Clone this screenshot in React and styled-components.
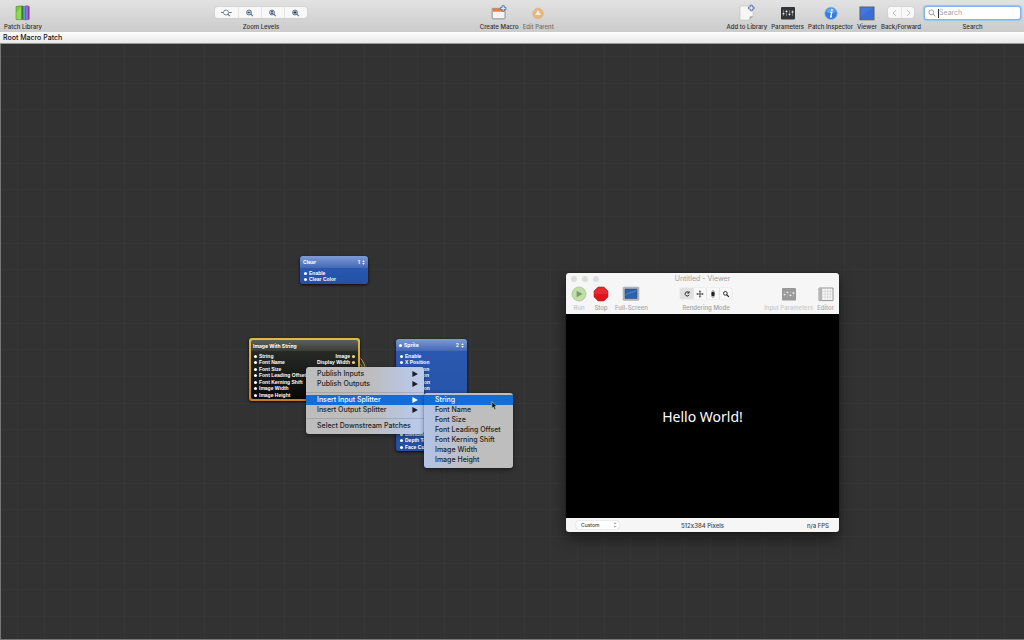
import React from 'react'
import styled, { createGlobalStyle } from 'styled-components'

const App = () => {
  return (
    <Window>
      <GlobalStyle />
      <Toolbar>
        <ToolGroup>
          <Tool label='Patch Library'><BooksIcon /></Tool>
        </ToolGroup>
        <ToolGroup>
          <ToolSet>
            <Segments>
              <Segment $width='23px' aria-label='Actual size'><ZoomIcon kind='actual' /></Segment>
              <Segment $width='23px' aria-label='Zoom out'><ZoomIcon kind='out' /></Segment>
              <Segment $width='23px' aria-label='Zoom to fit'><ZoomIcon kind='fit' /></Segment>
              <Segment $width='23px' aria-label='Zoom in'><ZoomIcon kind='in' /></Segment>
            </Segments>
            <Caption>Zoom Levels</Caption>
          </ToolSet>
        </ToolGroup>
        <ToolGroup>
          <Tool label='Create Macro'><MacroIcon /></Tool>
          <Tool label='Edit Parent' disabled><ParentIcon /></Tool>
        </ToolGroup>
        <ToolGroup>
          <Tool label='Add to Library'><AddIcon /></Tool>
          <Tool label='Parameters'><SlidersIcon /></Tool>
          <Tool label='Patch Inspector'><InfoIcon /></Tool>
          <Tool label='Viewer'><ScreenIcon /></Tool>
          <ToolSet>
            <Segments>
              <Segment $width='13px' aria-label='Back'><Chevron d='M6 2 3 5l3 3' /></Segment>
              <Segment $width='13px' aria-label='Forward'><Chevron d='m4 2 3 3-3 3' /></Segment>
            </Segments>
            <Caption>Back/Forward</Caption>
          </ToolSet>
          <ToolSet>
            <SearchField>
              <svg width='8' height='8' viewBox='0 0 8 8' fill='none' stroke='#777'>
                <circle cx='3.3' cy='3.3' r='2.4' strokeWidth='.7' />
                <path d='m5.1 5.1 2.2 2.3' strokeWidth='.8' />
              </svg>
              <Caret />
              <SearchInput id='search' type='search' placeholder='Search' />
            </SearchField>
            <Caption as='label' htmlFor='search'>Search</Caption>
          </ToolSet>
        </ToolGroup>
      </Toolbar>
      <PathBar>Root Macro Patch</PathBar>

      <Canvas>
        <Noodles width='24' height='26' viewBox='0 0 24 26' fill='none'>
          <path d='M4 10C13 9 15 18 18 26' />
          <path d='M4 16C12 15 13 20 15 26' />
        </Noodles>
        <Patch title='Clear' order='1' left='299px' top='212px' width='68px' inputs={['Enable', 'Clear Color']} />
        <Patch
          title='Image With String'
          left='248px'
          top='294px'
          width='111px'
          inputs={['String', 'Font Name', 'Font Size', 'Font Leading Offset', 'Font Kerning Shift', 'Image Width', 'Image Height']}
          outputs={['Image', 'Display Width']}
          selected
        />
        <Patch title='Sprite' order='2' left='395px' top='295px' width='71px' inputs={spriteInputs} dot />

        <Menu $left='305px' $top='323px' $width='118px' $tint='main'>
          <MenuItem>Publish Inputs<Arrow /></MenuItem>
          <MenuItem>Publish Outputs<Arrow /></MenuItem>
          <Separator />
          <MenuItem $active>Insert Input Splitter<Arrow /></MenuItem>
          <MenuItem>Insert Output Splitter<Arrow /></MenuItem>
          <Separator />
          <MenuItem>Select Downstream Patches</MenuItem>
        </Menu>
        <Menu $left='423px' $top='349px' $width='89px' $tint='sub'>
          {splitterInputs.map((name) => (
            <MenuItem key={name} $active={name === 'String'}>{name}</MenuItem>
          ))}
        </Menu>
        <Cursor width='7' height='10' viewBox='0 0 7 10'>
          <path d='M.8.6v7l1.6-1.5 1.2 2.8 1.4-.6-1.2-2.7h2.3z' fill='#111' stroke='#ddd' strokeWidth='.6' />
        </Cursor>

        <Viewer>
          <TitleBar>
            <Lights><i /><i /><i /></Lights>
            Untitled - Viewer
          </TitleBar>
          <ViewerTools>
            <ViewerGroup $gap='6px'>
              <Tool label='Run' tone='#c4c4c4'><RunIcon /></Tool>
              <Tool label='Stop' tone='#a2a2a2'><StopIcon /></Tool>
              <Tool label='Full-Screen' tone='#a8a8a8'><DisplayIcon /></Tool>
            </ViewerGroup>
            <ToolSet>
              <Segments>
                <Segment $width='13px' $on aria-label='Rotate'>
                  <Glyph><path d='M7.2 3.2A2.6 2.6 0 1 0 7.6 6M7.6 1.6v2.2H5.4' /></Glyph>
                </Segment>
                <Segment $width='13px' aria-label='Pan'>
                  <Glyph><path d='M5 1v8M1 5h8M4 2l1-1 1 1M4 8l1 1 1-1M2 4 1 5l1 1M8 4l1 1-1 1' strokeWidth='.9' /></Glyph>
                </Segment>
                <Segment $width='13px' aria-label='Mouse'>
                  <Glyph><path d='M3.4 2.2 5 .6l1.6 1.6M3.4 7.8 5 9.4l1.6-1.6' strokeWidth='.8' /><rect x='3.1' y='2.6' width='3.8' height='4.8' rx='1.2' fill='#222' strokeWidth='.4' /></Glyph>
                </Segment>
                <Segment $width='13px' aria-label='Magnify'>
                  <Glyph><circle cx='4.2' cy='4.2' r='2.3' /><path d='m5.8 5.8 2.8 2.8' strokeWidth='1.5' /></Glyph>
                </Segment>
              </Segments>
              <Caption $tone='#a2a2a2'>Rendering Mode</Caption>
            </ToolSet>
            <ViewerGroup $gap='4px'>
              <Tool label='Input Parameters' tone='#c8c8c8'><SlidersIcon color='#999' /></Tool>
              <Tool label='Editor' tone='#a8a8a8'><TableIcon /></Tool>
            </ViewerGroup>
          </ViewerTools>
          <Stage>Hello World!</Stage>
          <StatusBar>
            <SizePicker>
              <SizeSelect aria-label='Viewer size'><option>Custom</option></SizeSelect>
              <svg width='4' height='6' viewBox='0 0 4 6' fill='none' stroke='#555' strokeWidth='.6'>
                <path d='M.8 2 2 .8 3.2 2M.8 4 2 5.2 3.2 4' />
              </svg>
            </SizePicker>
            <span>512x384 Pixels</span>
            <span>n/a FPS</span>
          </StatusBar>
        </Viewer>
      </Canvas>
    </Window>
  )
}

export default App

const spriteInputs = [
  'Enable', 'X Position', 'Y Position', 'Z Position', 'X Rotation', 'Y Rotation', 'Z Rotation',
  'Width', 'Height', 'Color', 'Image', 'Mask Image', 'Blending', 'Depth Testing', 'Face Culling'
]

const splitterInputs = [
  'String', 'Font Name', 'Font Size', 'Font Leading Offset', 'Font Kerning Shift', 'Image Width', 'Image Height'
]

const Tool = ({ label, tone, disabled, children }) => (
  <ToolButton disabled={disabled}>
    {children}
    <Caption $tone={tone}>{label}</Caption>
  </ToolButton>
)

const Patch = ({ title, order, left, top, width, inputs, outputs = [], selected, dot }) => (
  <PatchBox $left={left} $top={top} $width={width} $selected={selected}>
    <PatchHead $selected={selected}>
      <PatchTitle>{dot && <Port />}{title}</PatchTitle>
      {order && (
        <Order>
          {order}
          <svg width='3' height='5' viewBox='0 0 3 5' fill='#fff'><path d='M1.5.2 2.8 2H.2zM1.5 4.8.2 3h2.6z' /></svg>
        </Order>
      )}
    </PatchHead>
    <PatchBody $selected={selected}>
      {inputs.map((name, i) => (
        <PortRow key={name}>
          <PortName><Port />{name}</PortName>
          {outputs[i] && <PortName>{outputs[i]}<Port $color='#f0d98a' /></PortName>}
        </PortRow>
      ))}
    </PatchBody>
  </PatchBox>
)

const BooksIcon = () => (
  <svg width='16' height='16' viewBox='0 0 16 16'>
    <path d='M1 1.5 6.5.8v14L1 14.4z' fill='#79c83c' stroke='#487c2a' strokeWidth='.5' />
    <path d='M1.4 8 6.4 1v13.4l-5-.4z' fill='#a1e264' opacity='.6' />
    <path d='M6.5.8h1.7v14H6.5z' fill='#3d7a32' />
    <path d='M8.2 1.4h2.3v13.4H8.2z' fill='#4b9fdb' stroke='#28577f' strokeWidth='.4' />
    <path d='M10.5.8h2.7v14h-2.7z' fill='#b463d3' stroke='#603075' strokeWidth='.4' />
    <path d='M13.2 1.2h1.3v13.2h-1.3z' fill='#6e3590' />
  </svg>
)

const ZoomIcon = ({ kind }) => (
  <svg width='11' height='8' viewBox='0 0 11 8' fill='none' stroke='#50698a' strokeWidth='.8'>
    <circle cx='5' cy='3.5' r='2.5' fill={kind === 'actual' ? '#fff' : '#b4c4d8'} />
    <path d='m6.8 5.2 2 2' strokeWidth='1.1' />
    {kind === 'actual' && <path d='M.2 3.5h1.9M8.2 3.5h2.4' stroke='#444' />}
    {kind === 'out' && <path d='M3.8 3.5h2.4' stroke='#333' />}
    {kind === 'fit' && <path d='M4 2.7h2M4 4.3h2' stroke='#333' />}
    {kind === 'in' && <path d='M3.6 3.5h2.8M5 2.1v2.8' stroke='#222' />}
  </svg>
)

const MacroIcon = () => (
  <svg width='16' height='16' viewBox='0 0 16 16'>
    <rect x='1.2' y='3.4' width='12.8' height='10.4' rx='.6' fill='#f4f4f4' stroke='#6c7078' strokeWidth='.7' />
    <path d='M1.6 3.7h12v3h-12z' fill='#ee7b35' />
    <path d='M11.2.6h2v1.8H15v2h-1.8v1.8h-2V4.4H9.4v-2h1.8z' fill='#dfe8f6' stroke='#4c6794' strokeWidth='.8' />
  </svg>
)

const ParentIcon = () => (
  <svg width='16' height='16' viewBox='0 0 16 16'>
    <circle cx='8' cy='8.4' r='5.2' fill='#f7a23c' stroke='#d98a38' strokeWidth='.6' />
    <path d='m8 5 3 5H5z' fill='#fff8ee' />
  </svg>
)

const AddIcon = () => (
  <svg width='16' height='18' viewBox='0 0 16 18'>
    <path d='M1 3h13v10l-3.5 4H1z' fill='#f6f6f6' stroke='#b4b4b4' strokeWidth='.5' />
    <path d='m14 13-3.5 4 .2-3.6z' fill='#a8a8a8' />
    <path d='M11.3 2.2h2V4h1.8v2h-1.8v1.8h-2V6H9.5V4h1.8z' fill='#dfe8f6' stroke='#4c6794' strokeWidth='.8' />
  </svg>
)

const SlidersIcon = ({ color = '#333538' }) => (
  <svg width='16' height='16' viewBox='0 0 16 16'>
    <rect x='1' y='2' width='14' height='12.6' rx='1' fill={color} />
    <path d='M3.5 5v6M6.5 5v6M9.5 5v6M12.5 5v6' stroke='#bbb' strokeWidth='.5' />
    <path d='M2.6 8.6h1.8M5.6 6.4h1.8M8.6 9.4h1.8M11.6 7h1.8' stroke='#eee' strokeWidth='1.3' />
  </svg>
)

const InfoIcon = () => (
  <svg width='16' height='16' viewBox='0 0 16 16'>
    <circle cx='8' cy='8.4' r='6.2' fill='#2f7de0' stroke='#8eb5e6' strokeWidth='.8' />
    <path d='M3 6.4a5.4 5.4 0 0 1 10 0c-2 2-8 2-10 0z' fill='#79aef0' opacity='.7' />
    <circle cx='8.9' cy='5.1' r='1' fill='#fff' />
    <path d='M7.2 7.4h1.6L7.7 11.8h1.2' fill='none' stroke='#fff' strokeWidth='1.3' />
  </svg>
)

const ScreenIcon = () => (
  <svg width='16' height='16' viewBox='0 0 16 16'>
    <rect x='1' y='2' width='14' height='12.8' fill='#3a6dd8' stroke='#5a5e66' strokeWidth='1' />
    <path d='M1.6 2.6h12.8L1.6 12z' fill='#5a8aec' opacity='.35' />
  </svg>
)

const Chevron = ({ d }) => (
  <svg width='10' height='10' viewBox='0 0 10 10' fill='none' stroke='#b4b4b4' strokeWidth='.8'><path d={d} /></svg>
)

const RunIcon = () => (
  <svg width='16' height='16' viewBox='0 0 16 16'>
    <circle cx='8' cy='8' r='7' fill='#bfe0a4' stroke='#a9b89f' strokeWidth='.7' />
    <path d='M5.6 4.8 11.6 8l-6 3.2z' fill='#7b9a6d' />
  </svg>
)

const StopIcon = () => (
  <svg width='16' height='16' viewBox='0 0 16 16'>
    <path d='M5.1 1h5.8L15 5.1v5.8L10.9 15H5.1L1 10.9V5.1z' fill='#e0141c' stroke='#a5383b' strokeWidth='.6' />
    <path d='M5.3 1.5h5.4l3.8 3.8V8h-13V5.3z' fill='#f04a4c' opacity='.4' />
  </svg>
)

const DisplayIcon = () => (
  <svg width='18' height='16' viewBox='0 0 18 16'>
    <rect x='1.2' y='1.2' width='15.6' height='13' rx='.6' fill='#b9bcc2' stroke='#8f9299' strokeWidth='.6' />
    <path d='M3 3h12v9.4H3z' fill='#2e62b0' stroke='#1d3c6c' strokeWidth='.5' />
    <path d='M3.4 9.4c4-4 7-1.4 11.2-5.4' stroke='#5b90d6' strokeWidth='.8' fill='none' />
  </svg>
)

const TableIcon = () => (
  <svg width='16' height='16' viewBox='0 0 16 16'>
    <path d='M1 2h14v12.6H1z' fill='#f6f6f6' stroke='#8b8b8b' strokeWidth='.9' />
    <path d='M1.2 2h3v12.4h-3z' fill='#b4b4b4' />
    <path d='M7 3v11M9.6 3v11M12.2 3v11M4.4 5.4H15M4.4 8.2H15M4.4 11H15' stroke='#c9c9c9' strokeWidth='.5' />
  </svg>
)

const Arrow = () => (
  <svg width='6' height='6' viewBox='0 0 6 6' fill='currentColor'><path d='M.4.1 5.9 3 .4 5.9z' /></svg>
)

const GlyphSvg = styled.svg.attrs({ viewBox: '0 0 10 10', fill: 'none', stroke: '#222', strokeWidth: 1.2 })`
  width: 8px;
  height: 8px;
`
const Glyph = ({ children }) => <GlyphSvg>{children}</GlyphSvg>

const GlobalStyle = createGlobalStyle`
  * {
    box-sizing: border-box;
  }
  body {
    margin: 0;
    font-family: Inter, "Liberation Sans", sans-serif;
    font-feature-settings: "calt" 0;
    background: #323232;
  }
  button, input, select {
    margin: 0;
    padding: 0;
    border: 0;
    background: none;
    color: inherit;
    font: inherit;
    font-feature-settings: inherit;
  }
  svg {
    display: block;
    flex-shrink: 0;
  }
`
const Window = styled.div`
  display: flex;
  flex-direction: column;
  min-height: 100vh;
`
const Toolbar = styled.header`
  display: flex;
  justify-content: space-between;
  height: 32px;
  padding: 4px 4px 0;
  background: linear-gradient(#e2e2e2, #cbcbcb);
`
const ToolGroup = styled.div`
  display: flex;
  gap: 4px;
`
const ToolButton = styled.button`
  display: flex;
  flex-direction: column;
  align-items: center;
  justify-content: flex-end;
  height: 27px;
  opacity: ${(props) => (props.disabled ? 0.6 : 1)};
`
const ToolSet = styled.div`
  display: flex;
  flex-direction: column;
  align-items: center;
  justify-content: flex-end;
  height: 27px;
`
const Caption = styled.span`
  margin-top: 2px;
  font-size: 6px;
  font-weight: 500;
  line-height: 8px;
  color: ${(props) => props.$tone || '#2e2e2e'};
  white-space: nowrap;
`
const Segments = styled.div`
  display: flex;
  margin-bottom: 3px;
  border-radius: 2px;
  background: #f8f8f8;
  box-shadow: 0 0 1px rgba(0, 0, 0, 0.3);
  overflow: hidden;
`
const Segment = styled.button`
  display: flex;
  align-items: center;
  justify-content: center;
  width: ${(props) => props.$width};
  height: 11px;
  background: ${(props) => (props.$on ? '#e0e0e0' : 'transparent')};
  & + & {
    border-left: 1px solid #e4e4e4;
  }
`
const SearchField = styled.div`
  display: flex;
  align-items: center;
  width: 95px;
  height: 12px;
  margin-bottom: 2px;
  padding: 0 3px;
  border-radius: 2px;
  background: #fff;
  box-shadow: 0 0 0 1px #7fb2ee, 0 0 1px 2px #9cc4f2;
`
const Caret = styled.i`
  width: 1px;
  height: 9px;
  margin-left: 2px;
  background: #333;
`
const SearchInput = styled.input`
  flex: 1;
  min-width: 0;
  font-size: 7px;
  line-height: 10px;
  outline: none;
  &::placeholder {
    color: #a5a5a5;
  }
`
const PathBar = styled.div`
  height: 12px;
  padding: 0 3px;
  border-bottom: 1px solid #9a9a9a;
  background: linear-gradient(#fdfdfd, #e9e9e9);
  font-size: 7px;
  font-weight: 500;
  line-height: 11px;
  color: #111;
`
const Canvas = styled.main`
  position: relative;
  flex: 1;
  border-left: 1px solid #777;
  border-bottom: 1px solid #777;
  background-color: #323232;
  background-image:
    linear-gradient(90deg, #363636 1px, transparent 1px, transparent 27px, #363636 27px, #363636 28px, transparent 28px, transparent 53px, #363636 53px, #363636 54px, transparent 54px),
    linear-gradient(#363636 1px, transparent 1px, transparent 27px, #363636 27px, #363636 28px, transparent 28px, transparent 53px, #363636 53px, #363636 54px, transparent 54px);
  background-size: 80px 80px;
  background-position: 16px 12px;
`
const Noodles = styled.svg`
  position: absolute;
  left: 348px;
  top: 302px;
  stroke: #c9a64a;
`
const PatchBox = styled.section`
  position: absolute;
  left: ${(props) => props.$left};
  top: ${(props) => props.$top};
  width: ${(props) => props.$width};
  padding: ${(props) => (props.$selected ? '2px' : '0')};
  border-radius: 3px;
  background: ${(props) => (props.$selected ? 'linear-gradient(#dcbc4c, #c47a2c)' : '#2450a4')};
  box-shadow: 0 1px 3px rgba(0, 0, 0, 0.8);
  color: #fff;
  font-size: 5px;
  font-weight: 700;
  overflow: hidden;
`
const PatchHead = styled.header`
  display: flex;
  align-items: center;
  justify-content: space-between;
  height: ${(props) => (props.$selected ? '11px' : '12px')};
  padding: 0 ${(props) => (props.$selected ? '2px' : '3px')};
  background: ${(props) => (props.$selected ? 'linear-gradient(#5e605c, #3a3c38)' : 'linear-gradient(#7d9bd6, #4468b4)')};
  border-radius: 2px 2px 0 0;
`
const PatchTitle = styled.span`
  display: flex;
  align-items: center;
  gap: 2px;
`
const Order = styled.span`
  display: flex;
  align-items: center;
  gap: 2px;
`
const PatchBody = styled.div`
  display: flex;
  flex-direction: column;
  padding: ${(props) => (props.$selected ? '2px 3px 1px' : '2px 4px 1px')};
  border-radius: 0 0 2px 2px;
  background: ${(props) => (props.$selected ? 'linear-gradient(#272a25, #070907)' : 'linear-gradient(#2a58b0, #2450a4)')};
  font-family: "Liberation Sans", Arial, sans-serif;
`
const PortRow = styled.div`
  display: flex;
  justify-content: space-between;
  line-height: 6px;
  &:nth-child(even) {
    line-height: 7px;
  }
`
const PortName = styled.span`
  display: flex;
  align-items: center;
  gap: 2px;
  white-space: nowrap;
`
const Port = styled.i`
  width: 3px;
  height: 3px;
  border-radius: 50%;
  background: ${(props) => props.$color || '#fff'};
`
const Menu = styled.div`
  position: absolute;
  left: ${(props) => props.$left};
  top: ${(props) => props.$top};
  width: ${(props) => props.$width};
  padding: 2px 0 3px;
  border-radius: 3px;
  background: ${(props) => props.$tint === 'main'
    ? 'linear-gradient(90deg, #bdbdbd 55%, #b9c6e2 85%, #bccbec)'
    : 'linear-gradient(90deg, #b3c3e6, #bebebe 50%)'};
  box-shadow: 0 0 1px rgba(0, 0, 0, 0.6), 0 2px 5px rgba(0, 0, 0, 0.4);
`
const MenuItem = styled.button`
  display: flex;
  align-items: center;
  justify-content: space-between;
  width: 100%;
  height: 10px;
  padding: 0 6px 0 11px;
  background: ${(props) => (props.$active ? '#146cd8' : 'transparent')};
  color: ${(props) => (props.$active ? '#fff' : '#1c1e22')};
  font-size: 7px;
  font-weight: 500;
  line-height: 10px;
  white-space: nowrap;
`
const Separator = styled.hr`
  height: 1px;
  margin: 3px 0 2px;
  border: 0;
  background: rgba(0, 0, 0, 0.12);
`
const Cursor = styled.svg`
  position: absolute;
  left: 490px;
  top: 357px;
`
const Viewer = styled.section`
  position: absolute;
  left: 565px;
  top: 229px;
  width: 273px;
  border-radius: 3px;
  background: #f6f6f6;
  box-shadow: 0 0 1px #000, 0 6px 14px rgba(0, 0, 0, 0.5);
  overflow: hidden;
`
const TitleBar = styled.header`
  position: relative;
  height: 12px;
  font-size: 7px;
  line-height: 12px;
  text-align: center;
  color: #a0a0a0;
`
const Lights = styled.div`
  position: absolute;
  left: 5px;
  top: 3px;
  display: flex;
  gap: 5px;
  i {
    width: 6px;
    height: 6px;
    border-radius: 50%;
    background: #dcdcdc;
  }
`
const ViewerTools = styled.div`
  display: flex;
  justify-content: space-between;
  height: 29px;
  padding: 0 5px;
`
const ViewerGroup = styled.div`
  display: flex;
  gap: ${(props) => props.$gap};
`
const Stage = styled.div`
  display: flex;
  align-items: center;
  justify-content: center;
  height: 204px;
  background: #000;
  color: #fff;
  font-family: "Noto Sans", sans-serif;
  font-size: 14px;
`
const StatusBar = styled.footer`
  display: grid;
  grid-template-columns: 1fr auto 1fr;
  align-items: center;
  height: 14px;
  padding: 0 10px;
  font-size: 6px;
  font-weight: 500;
  color: #444;
  & > :last-child {
    justify-self: end;
  }
`
const SizePicker = styled.div`
  display: flex;
  align-items: center;
  width: 43px;
  height: 8px;
  padding: 0 2px 0 5px;
  border-radius: 2px;
  background: #fff;
  box-shadow: 0 0 1px rgba(0, 0, 0, 0.4);
`
const SizeSelect = styled.select`
  flex: 1;
  min-width: 0;
  appearance: none;
  font-size: 5px;
  line-height: 8px;
`
